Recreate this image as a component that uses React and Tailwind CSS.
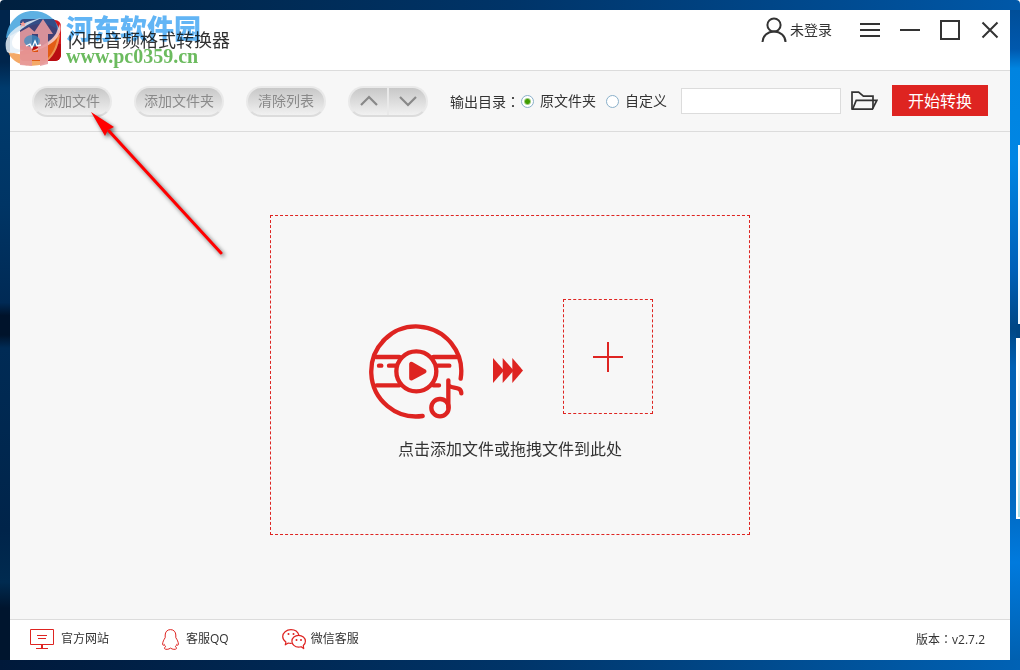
import { useState } from 'react'
import clsx from 'clsx'

const FONT = "font-['Open_Sans','Noto_Sans_CJK_SC',sans-serif]"

const pillClass =
  'h-[31px] shrink-0 rounded-full border-2 border-[#e9e9e9] border-b-[#dcdcdc] bg-linear-to-b from-[#c8c8c8] to-[#f1f1f1] text-[14px] leading-[20px] text-[#8a8a8a]'

function AppIcon() {
  return (
    <svg className="size-[41px] shrink-0" viewBox="0 0 41 41" aria-hidden="true">
      <rect width="41" height="41" rx="6" fill="#d3161c" />
      <path d="M0 24h41v11a6 6 0 0 1-6 6H6a6 6 0 0 1-6-6z" fill="#b90d12" />
    </svg>
  )
}

function UserIcon() {
  return (
    <svg width="26" height="26" viewBox="0 0 26 26" fill="none" stroke="#333" strokeWidth="2" aria-hidden="true">
      <circle cx="13" cy="8" r="6.6" />
      <path d="M1.5 25a11.5 10.6 0 0 1 23 0" />
    </svg>
  )
}

function FolderIcon() {
  return (
    <svg width="27" height="20" viewBox="0 0 27 20" fill="none" stroke="#333" strokeWidth="1.7" aria-hidden="true">
      <path d="M1 18.5V1.2h6.6l4.8 4H22v12.3" />
      <path d="M1.6 18.2 5.2 9.4h20.6L21.4 18.2z" />
    </svg>
  )
}

function DiscIcon() {
  return (
    <svg
      className="mt-[25px] size-[95px]"
      viewBox="41 101 285 285"
      fill="none"
      stroke="#de2421"
      strokeWidth="13"
      strokeLinecap="round"
      aria-hidden="true"
    >
      <path d="M316 265A135 135 0 1 0 202 377" />
      <path d="M62 200h70M234 200h71M64 285h68M234 285h17" />
      <path d="M71 226h7M101 226h20M247 226h35" />
      <circle cx="183" cy="243" r="60" />
      <path d="M168 221v43l39-21z" fill="#de2421" strokeLinejoin="round" />
      <circle cx="254" cy="352" r="26" />
      <path d="M279 352v-82M280 284c6 14 37 0 38 25" />
    </svg>
  )
}

function ForwardIcon() {
  return (
    <svg className="mt-[59px]" width="30" height="25" viewBox="0 0 30 25" fill="#de2421" aria-hidden="true">
      <path d="M0 0 11 12.5 0 25z" />
      <path d="M9.7 0l11 12.5L9.7 25z" />
      <path d="M19.300 0 30 12.500 19.300 25z" />
    </svg>
  )
}

function SiteIcon() {
  return (
    <svg width="24" height="20" viewBox="0 0 24 20" fill="none" stroke="#de2421" aria-hidden="true">
      <path d="M.5.5h23v15H.5zM7 6.5h10M8 9.5h8M6 19.5h12" />
      <path d="M12 16v3" strokeWidth="2" />
    </svg>
  )
}

function QQIcon() {
  return (
    <svg width="17" height="21" viewBox="0 0 17 21" fill="none" stroke="#de2421" strokeLinejoin="round" aria-hidden="true">
      <path d="M8.500.6C5.200.6 3.200 3 3.200 6v2.600C1.800 10.800.6 13 .6 15.200c0 1.200.5 1.600 1.700.2.300 1 .7 1.700 1.400 2.300-1.200.5-1.500 1.200-1.100 2 .8 1 4.100.9 5.900-.6 1.800 1.500 5.100 1.600 5.900.6.400-.8.100-1.500-1.100-2 .7-.6 1.100-1.300 1.400-2.300 1.200 1.400 1.700 1 1.700-.2 0-2.200-1.200-4.400-2.600-6.600V6c0-3-2-5.400-5.300-5.400z" />
    </svg>
  )
}

function WechatIcon() {
  return (
    <svg width="24" height="21" viewBox="0 0 24 21" fill="none" stroke="#de2421" strokeWidth="1.2" strokeLinejoin="round" aria-hidden="true">
      <path d="M17 6.3C16 3 12.8.7 9 .7 4.400.7.700 3.700.7 7.500c0 2.300 1.200 4.100 3.200 5.400l-.6 2.900 3-1.800c1 .3 2.300.4 3.400.3" />
      <path d="M16.600 6.400c-3.700 0-6.700 2.500-6.700 5.800s3 5.900 6.700 5.900c.8 0 1.700-.1 2.500-.4l2.600 1.900-.4-3c1.300-1 2.100-2.600 2.100-4.400 0-3.300-3.100-5.800-6.800-5.800z" />
      <g fill="#de2421" stroke="none">
        <circle cx="6.5" cy="5" r="1" />
        <circle cx="11.5" cy="5" r="1" />
        <circle cx="14.5" cy="11" r="1" />
        <circle cx="19" cy="11" r="1" />
      </g>
    </svg>
  )
}

// 站点水印，盖在标题栏左侧
function Watermark() {
  return (
    <div className="pointer-events-none absolute left-[5px] top-[10px] flex gap-[4px]" aria-hidden="true">
      <svg className="size-[57px]" viewBox="0 0 57 57">
        <path d="M1 28C3 11 14 1 28 1c13 0 23 7 27 20-9-7-17-9-27-6C17 18 8 25 1 28z" fill="#4ba7df" opacity=".9" />
        <path d="M15 13q0-4 4-4h30q3 5 4 13L42 36H15z" fill="#2f4580" opacity=".9" />
        <path d="M3 41c16 7 36 4 52-17-1 13-7 25-17 30-8 3-22 2-28-3-4-3-6-6-7-10z" fill="#f3a057" opacity=".9" />
        <path d="M15 38c10 5 26 1 38-15-1 13-6 22-13 28H19q-4 0-4-4z" fill="#e0560f" opacity=".9" />
        <path d="M2 42C-4 27 10 13 37 8 19 15 7 25 7 33c0 5 5 7 12 7C11 44 5 44 2 42z" fill="#e4eff7" opacity=".85" />
        <path d="M55 14c4 12-10 24-30 28 15-7 25-14 27-21 1-3 2-5 3-7z" fill="#fbdcd9" opacity=".8" />
        <path d="M15 55V22l9-5 7 6-4 1v18h6V24h-5l10-15 10 15h-5v30l-8 2v-6h-8v6z" fill="#e79a9e" opacity=".9" />
        <ellipse cx="27" cy="31" rx="8" ry="6" fill="#3c8fc4" opacity=".75" />
        <path d="m21 36 4-2 2 4 3-7 2 5 4-1" fill="none" stroke="#fff" strokeWidth="1.3" />
        <path d="m18 11 1 2h2l-1.500 1.500.5 2.500-2-1.500-2 1.500.5-2.500L15 13h2z" fill="#f59b94" />
      </svg>
      <div className="mt-[3px] mix-blend-multiply">
        <p className="font-['Noto_Sans_CJK_SC',sans-serif] text-[27px] font-black leading-[29px] text-[#62b5f5]">河东软件园</p>
        <p className="font-['Liberation_Serif',serif] text-[20px] font-bold leading-[28px] text-[#6cbb5f]">www.pc0359.cn</p>
      </div>
    </div>
  )
}

// 指向“添加文件”的标注箭头
function PointerArrow() {
  return (
    <svg
      className="pointer-events-none absolute left-[85px] top-[105px] drop-shadow-[2px_2px_2px_rgba(0,0,0,0.6)]"
      width="150"
      height="160"
      viewBox="0 0 150 160"
      aria-hidden="true"
    >
      <path d="M24 26 136 148" stroke="#f00" strokeWidth="3" strokeLinecap="round" />
      <path d="M6 7 29 22l-6 3-3 6z" fill="#f00" />
    </svg>
  )
}

function TitleBar() {
  return (
    <header className="flex h-[61px] shrink-0 items-start border-b border-[#dcdcdc] bg-white px-[10px]">
      <div className="flex h-full items-center gap-[7px]">
        <AppIcon />
        <h1 className="text-[18px] leading-[24px] text-[#333]">闪电音频格式转换器</h1>
      </div>
      <div className="ml-auto flex h-[40px] items-center gap-5">
        <button type="button" className="mr-[8px] flex items-center gap-[3px] text-[14px] leading-[20px] text-[#333]">
          <UserIcon />
          未登录
        </button>
        <button type="button" aria-label="菜单">
          <svg width="20" height="20" viewBox="0 0 20 20" stroke="#333" strokeWidth="2"><path d="M0 4h20M0 10h20M0 16h20" /></svg>
        </button>
        <button type="button" aria-label="最小化">
          <svg width="20" height="20" viewBox="0 0 20 20" stroke="#333" strokeWidth="2"><path d="M0 10h20" /></svg>
        </button>
        <button type="button" aria-label="最大化">
          <svg width="20" height="20" viewBox="0 0 20 20" fill="none" stroke="#333" strokeWidth="2"><path d="M1 1h18v18H1z" /></svg>
        </button>
        <button type="button" aria-label="关闭">
          <svg width="20" height="20" viewBox="0 0 20 20" stroke="#333" strokeWidth="2"><path d="m2.500 2.500 15 15M17.500 2.500l-15 15" /></svg>
        </button>
      </div>
    </header>
  )
}

function DirOption({ value, label, checked, onChange }) {
  return (
    <label className="flex items-center gap-[6px]">
      <input
        type="radio"
        name="outputDir"
        value={value}
        checked={checked}
        onChange={() => onChange(value)}
        className={clsx(
          'size-[13px] appearance-none rounded-full border border-[#8ab0ca]',
          checked ? 'bg-[radial-gradient(circle,#3f9c00_2px,#fff_4px)]' : 'bg-white'
        )}
      />
      {label}
    </label>
  )
}

// 居中显示的全角冒号
function Colon() {
  return <span className="font-['Noto_Sans_CJK_TC',sans-serif]">：</span>
}

function Toolbar() {
  const [outputDir, setOutputDir] = useState('source')
  const [path, setPath] = useState('')

  return (
    <div className="flex h-[61px] shrink-0 items-center border-b border-[#dcdcdc] px-[22px] text-[14px] leading-[20px] text-[#333]">
      <div className="flex gap-[22px]">
        <button type="button" className={clsx(pillClass, 'w-[80px]')}>添加文件</button>
        <button type="button" className={clsx(pillClass, 'w-[90px]')}>添加文件夹</button>
        <button type="button" className={clsx(pillClass, 'w-[80px]')}>清除列表</button>
        <div className={clsx(pillClass, 'flex w-[80px]')}>
          <button type="button" aria-label="上移" className="flex flex-1 items-center justify-center border-r-2 border-[#e9e9e9]">
            <svg width="18" height="12" viewBox="0 0 18 12" fill="none" stroke="#888" strokeWidth="2.2"><path d="m1 10 8-8 8 8" /></svg>
          </button>
          <button type="button" aria-label="下移" className="flex flex-1 items-center justify-center">
            <svg width="18" height="12" viewBox="0 0 18 12" fill="none" stroke="#888" strokeWidth="2.2"><path d="m1 2 8 8 8-8" /></svg>
          </button>
        </div>
      </div>
      <div className="ml-[22px] flex shrink-0 items-center" role="radiogroup" aria-labelledby="output-label">
        <span id="output-label" className="w-[71px]">输出目录<Colon /></span>
        <div className="flex gap-[10px]">
          <DirOption value="source" label="原文件夹" checked={outputDir === 'source'} onChange={setOutputDir} />
          <DirOption value="custom" label="自定义" checked={outputDir === 'custom'} onChange={setOutputDir} />
        </div>
      </div>
      <input
        type="text"
        aria-label="输出目录"
        value={path}
        onChange={(e) => setPath(e.target.value)}
        className="ml-[14px] h-[26px] min-w-0 flex-1 border border-[#dcdcdc] bg-white px-2 outline-none"
      />
      <button type="button" aria-label="浏览" className="ml-[10px] shrink-0">
        <FolderIcon />
      </button>
      <button type="button" className="mb-px ml-[14px] h-[31px] w-[96px] shrink-0 bg-[#de2421] text-[16px] text-white">
        开始转换
      </button>
    </div>
  )
}

function DropZone() {
  return (
    <main className="flex flex-1 items-center justify-center pb-px">
      <section className="flex h-[320px] w-[480px] flex-col items-center border border-dashed border-[#de2421] pt-[83px]">
        <div className="flex items-start pl-[2px]">
          <DiscIcon />
          <div className="ml-[29px] mr-[40px]">
            <ForwardIcon />
          </div>
          <button
            type="button"
            aria-label="添加文件"
            className="flex h-[115px] w-[90px] items-center justify-center border border-dashed border-[#de2421]"
          >
            <svg width="30" height="30" viewBox="0 0 30 30" stroke="#de2421" strokeWidth="2"><path d="M15 0v30M0 15h30" /></svg>
          </button>
        </div>
        <p className="mt-[18px] text-[16px] leading-[24px] text-[#333]">点击添加文件或拖拽文件到此处</p>
      </section>
    </main>
  )
}

function Footer() {
  return (
    <footer className="flex h-[41px] shrink-0 items-center border-t border-[#dcdcdc] bg-white pb-[2px] pl-[20px] pr-[25px] text-[12px] leading-[18px] text-[#333]">
      <nav className="flex gap-[53px]">
        <a href="#site" className="flex items-center gap-[7px]"><SiteIcon />官方网站</a>
        <a href="#qq" className="flex items-center gap-[7px]"><QQIcon />客服QQ</a>
        <a href="#wechat" className="flex items-center gap-[5px]"><WechatIcon />微信客服</a>
      </nav>
      <span className="ml-auto">版本<Colon />v2.7.2</span>
    </footer>
  )
}

function App() {
  return (
    <div className={clsx(FONT, 'relative flex min-h-screen flex-col overflow-hidden rounded-t-[4px]')}>
      <div className="h-[10px] shrink-0 bg-linear-to-r from-[#00203f] via-[#003468] to-[#0058a8]" />
      <div className="flex flex-1">
        <div className="w-[10px] shrink-0 bg-[linear-gradient(#00254c_0%,#00254c_8%,#003b6d_12%,#003565_30%,#002a55_45%,#00132b_47%,#00132b_50%,#002b55_52%,#00244a_80%,#002b50_88%,#00152e_92%)]" />
        <div className="flex min-w-0 flex-1 flex-col bg-[#f7f7f7]">
          <TitleBar />
          <Toolbar />
          <DropZone />
          <Footer />
        </div>
        <div className="flex w-[10px] shrink-0 flex-col items-end bg-[linear-gradient(#004e98_0%,#0058ad_6%,#0084e0_9%,#0086e4_23%,#0060b8_40%,#004785_49%,#0060b4_55%,#0068c0_75%,#007add_85%,#0060b0_100%)] pt-[135px]">
          <div className="h-[179px] w-[2px] bg-[#eef8ff]" />
          <div className="h-[14px] w-[4px] bg-[#004785]" />
          <div className="h-[181px] w-[4px] border-2 border-r-0 border-white bg-linear-to-b from-white to-[#a8e2ee]" />
        </div>
      </div>
      <div className="h-[10px] shrink-0 bg-linear-to-r from-[#00193a] via-[#003468] to-[#0062b5]" />
      <Watermark />
      <PointerArrow />
    </div>
  )
}

export default App
